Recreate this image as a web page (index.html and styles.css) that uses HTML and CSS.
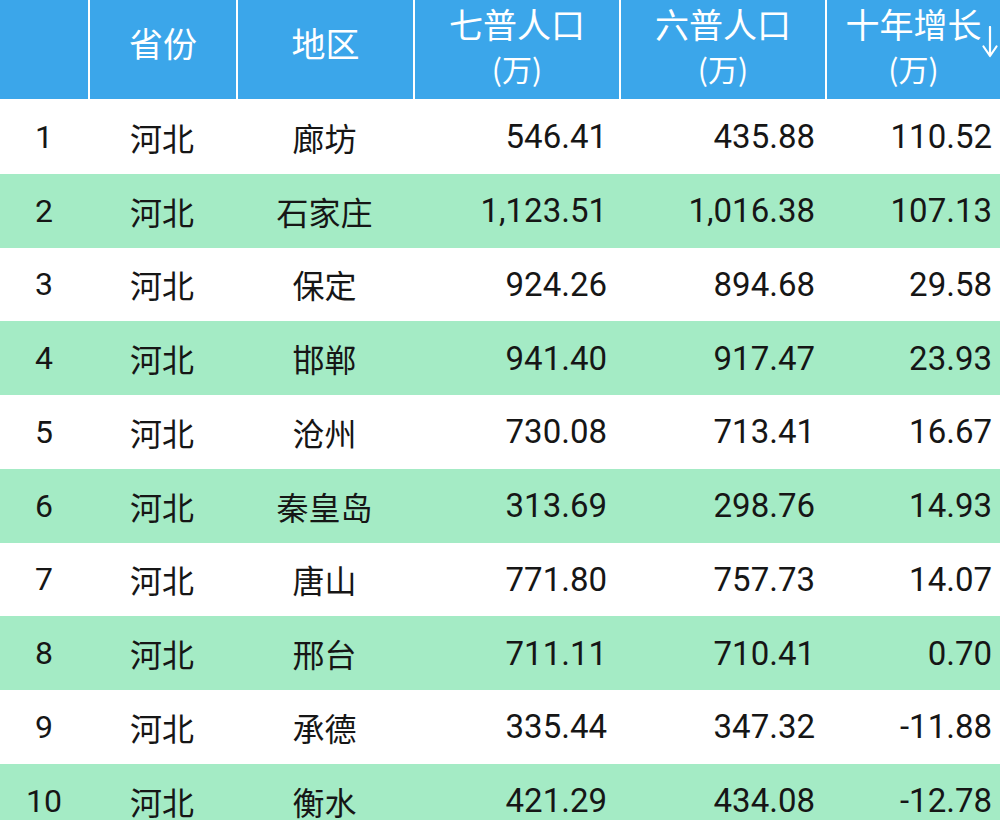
FILE: index.html
```html
<!DOCTYPE html>
<html lang="zh-CN">
<head>
<meta charset="utf-8">
<link rel="stylesheet" href="styles.css">
</head>
<body>
<div class="table">
  <div class="row head">
    <div class="cell h"></div>
    <div class="cell h one">省份</div>
    <div class="cell h one">地区</div>
    <div class="cell h two"><span class="l1">七普人口</span><span class="l2">(万)</span></div>
    <div class="cell h two"><span class="l1">六普人口</span><span class="l2">(万)</span></div>
    <div class="cell h two sort"><span class="l1">十年增长</span><span class="l2">(万)</span>
      <svg class="arrow" viewBox="0 0 16 32" width="16" height="32"><path d="M8 1 V30 M1.5 20.5 L8 30 L14.5 20.5" fill="none" stroke="#fff" stroke-width="2.2" stroke-linecap="round" stroke-linejoin="round"/></svg>
    </div>
  </div>
  <div class="row"><div class="cell rank">1</div><div class="cell cn">河北</div><div class="cell cn">廊坊</div><div class="cell num n1">546.41</div><div class="cell num n2">435.88</div><div class="cell num n3">110.52</div></div>
  <div class="row alt"><div class="cell rank">2</div><div class="cell cn">河北</div><div class="cell cn">石家庄</div><div class="cell num n1">1,123.51</div><div class="cell num n2">1,016.38</div><div class="cell num n3">107.13</div></div>
  <div class="row"><div class="cell rank">3</div><div class="cell cn">河北</div><div class="cell cn">保定</div><div class="cell num n1">924.26</div><div class="cell num n2">894.68</div><div class="cell num n3">29.58</div></div>
  <div class="row alt"><div class="cell rank">4</div><div class="cell cn">河北</div><div class="cell cn">邯郸</div><div class="cell num n1">941.40</div><div class="cell num n2">917.47</div><div class="cell num n3">23.93</div></div>
  <div class="row"><div class="cell rank">5</div><div class="cell cn">河北</div><div class="cell cn">沧州</div><div class="cell num n1">730.08</div><div class="cell num n2">713.41</div><div class="cell num n3">16.67</div></div>
  <div class="row alt"><div class="cell rank">6</div><div class="cell cn">河北</div><div class="cell cn">秦皇岛</div><div class="cell num n1">313.69</div><div class="cell num n2">298.76</div><div class="cell num n3">14.93</div></div>
  <div class="row"><div class="cell rank">7</div><div class="cell cn">河北</div><div class="cell cn">唐山</div><div class="cell num n1">771.80</div><div class="cell num n2">757.73</div><div class="cell num n3">14.07</div></div>
  <div class="row alt"><div class="cell rank">8</div><div class="cell cn">河北</div><div class="cell cn">邢台</div><div class="cell num n1">711.11</div><div class="cell num n2">710.41</div><div class="cell num n3">0.70</div></div>
  <div class="row"><div class="cell rank">9</div><div class="cell cn">河北</div><div class="cell cn">承德</div><div class="cell num n1">335.44</div><div class="cell num n2">347.32</div><div class="cell num n3">-11.88</div></div>
  <div class="row alt"><div class="cell rank">10</div><div class="cell cn">河北</div><div class="cell cn">衡水</div><div class="cell num n1">421.29</div><div class="cell num n2">434.08</div><div class="cell num n3">-12.78</div></div>
</div>
</body>
</html>
```
FILE: styles.css
```css
html, body {
  margin: 0;
  padding: 0;
  background: #ffffff;
  overflow: hidden;
}
body {
  width: 1000px;
  height: 820px;
  font-family: Roboto, "Noto Sans CJK SC", sans-serif;
  color: #161616;
}
.table {
  display: flex;
  flex-direction: column;
}
.row {
  display: grid;
  grid-template-columns: 88px 148px 177px 206px 206px 175px;
  height: 73.75px;
  background: #ffffff;
}
.row.alt {
  background: #a4ebc5;
}
.row.head {
  height: 100px;
  background: #ffffff;
}
.cell {
  display: flex;
  align-items: center;
  box-sizing: border-box;
}
.cell.h {
  background: #3ba6ea;
  color: #ffffff;
  font-family: "Noto Sans CJK SC", sans-serif;
  height: 99px;
  border-left: 2px solid #ffffff;
  justify-content: center;
  flex-direction: column;
  position: relative;
}
.cell.h:first-child {
  border-left: none;
}
.cell.h.one {
  font-size: 34px;
  justify-content: flex-start;
  padding-top: 21px;
  line-height: 44px;
}
.cell.h.two {
  justify-content: flex-start;
  padding-top: 2px;
}
.l1 {
  font-size: 34px;
  line-height: 44px;
}
.l2 {
  font-size: 30px;
  line-height: 44px;
}
.arrow {
  position: absolute;
  right: 2px;
  top: 26px;
}
.rank {
  justify-content: center;
  font-size: 32px;
}
.cn {
  justify-content: center;
  font-family: "Noto Sans CJK SC", sans-serif;
  font-size: 32px;
}
.num {
  justify-content: flex-end;
  font-size: 33px;
}
.n1 { padding-right: 12px; }
.n2 { padding-right: 10px; }
.n3 { padding-right: 8px; }
```
